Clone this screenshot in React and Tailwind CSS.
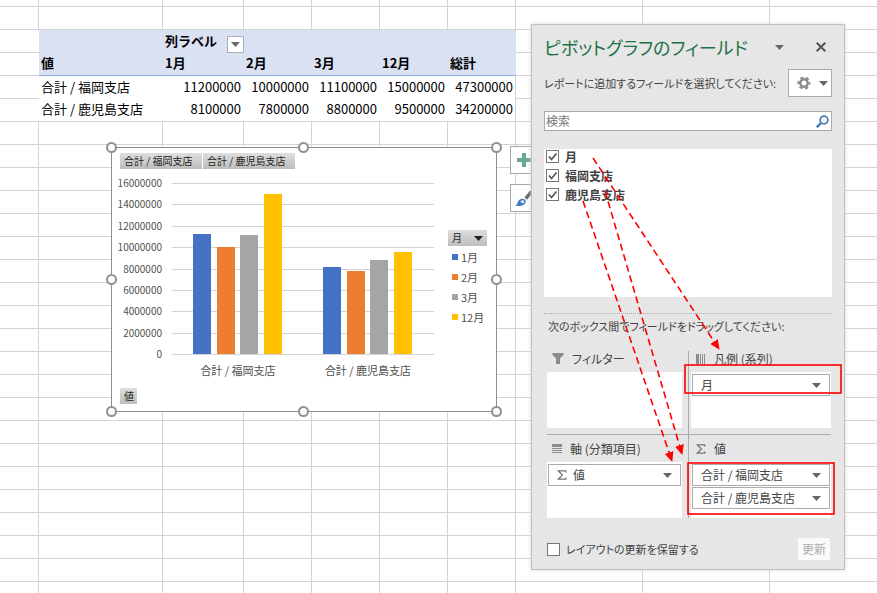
import { useState } from "react";

const COLUMNS = ["値", "1月", "2月", "3月", "12月", "総計"];

const ROWS = [
  { name: "合計 / 福岡支店", values: [11200000, 10000000, 11100000, 15000000] },
  { name: "合計 / 鹿児島支店", values: [8100000, 7800000, 8800000, 9500000] },
];

const SERIES = [
  { name: "1月", color: "#4472c4" },
  { name: "2月", color: "#ed7d31" },
  { name: "3月", color: "#a5a5a5" },
  { name: "12月", color: "#ffc000" },
];

const MAX = 16000000;
const TICKS = [0, 2, 4, 6, 8, 10, 12, 14, 16].map((n) => n * 1000000);

const Caret = ({ className = "" }) => (
  <svg viewBox="0 0 9 5" className={`w-[9px] h-[5px] shrink-0 ${className}`}>
    <path d="M0 0h9L4.5 5z" fill="currentColor" />
  </svg>
);

/* ---------- worksheet ---------- */

const EmptyRow = ({ first }) => (
  <tr className={first ? "h-[7px]" : "h-[23px]"}>
    {Array.from({ length: 10 }, (_, i) => (
      <td key={i} className="border-r border-b border-[#d4d4d4] p-0"></td>
    ))}
  </tr>
);

const Blank = ({ noRight }) => (
  <td
    className={
      noRight
        ? "border-b border-[#d4d4d4] p-0"
        : "border-r border-b border-[#d4d4d4] p-0"
    }></td>
);

const Sheet = () => (
  <table className="w-full table-fixed border-separate border-spacing-0 text-[13px] leading-5 text-black">
    <colgroup>
      <col className="w-[39px]" />
      <col className="w-[124px]" />
      <col className="w-[81px]" />
      <col className="w-[68px]" />
      <col className="w-[68px]" />
      <col className="w-[68px]" />
      <col className="w-[68px]" />
      <col className="w-[127px]" />
      <col className="w-[127px]" />
      <col />
    </colgroup>
    <tbody>
      <EmptyRow first />
      <EmptyRow />
      <tr className="h-[23px]">
        <Blank noRight />
        <td className="bg-[#d9e1f2] p-0"></td>
        <th className="bg-[#d9e1f2] p-0 pl-0.5 text-left font-bold">
          <div className="flex h-[22px] items-end justify-between">
            <span className="pb-0.5">列ラベル</span>
            <button
              type="button"
              aria-label="列ラベルのフィルター"
              className="flex h-[17px] w-[17px] items-center justify-center border border-[#a6b0bd] bg-white text-[#6a6a6a]">
              <Caret />
            </button>
          </div>
        </th>
        <td colSpan={4} className="bg-[#d9e1f2] p-0"></td>
        <Blank />
        <Blank />
        <Blank />
      </tr>
      <tr className="h-[23px]">
        <Blank noRight />
        {COLUMNS.map((name) => (
          <th
            key={name}
            className="border-b border-[#8ea9db] bg-[#d9e1f2] p-0 pb-0.5 pl-0.5 text-left font-bold">
            {name}
          </th>
        ))}
        <Blank />
        <Blank />
        <Blank />
      </tr>
      {ROWS.map((row, i) => {
        const line = i === ROWS.length - 1 ? "border-b border-b-[#d4d4d4]" : "";
        const total = row.values.reduce((a, b) => a + b, 0);
        return (
          <tr key={row.name} className="h-[23px]">
            <Blank noRight />
            <th
              className={`p-0 pb-0.5 pl-0.5 text-left font-normal whitespace-nowrap ${line}`}>
              {row.name}
            </th>
            {row.values.map((v, j) => (
              <td key={j} className={`p-0 pr-[3px] pb-0.5 text-right ${line}`}>
                {v}
              </td>
            ))}
            <td
              className={`border-r border-r-[#d4d4d4] p-0 pr-0.5 pb-0.5 text-right ${line}`}>
              {total}
            </td>
            <Blank />
            <Blank />
            <Blank />
          </tr>
        );
      })}
      {Array.from({ length: 21 }, (_, i) => (
        <EmptyRow key={i} />
      ))}
    </tbody>
  </table>
);

/* ---------- pivot chart ---------- */

const Handle = ({ className }) => (
  <span
    className={`absolute h-[11px] w-[11px] rounded-full border-2 border-[#8f8f8f] bg-white ${className}`}></span>
);

const Chip = ({ children, className = "" }) => (
  <button
    type="button"
    className={`flex h-4 items-center bg-linear-to-b from-[#dedede] to-[#bdbdbd] px-1 text-[10px] leading-4 whitespace-nowrap text-[#222] ${className}`}>
    {children}
  </button>
);

const Plot = () => {
  const y = (v) => 185 - (v / MAX) * 171;
  const groupX = [81, 211];

  return (
    <svg width="325" height="219" className="shrink-0" fill="#505050">
      {TICKS.map((t) => (
        <g key={t}>
          <rect x="60" y={Math.round(y(t))} width="262" height="1" fill="#d4d4d4" />
          <text x="50" y={Math.round(y(t)) + 4} textAnchor="end" fontSize="10">
            {t}
          </text>
        </g>
      ))}
      {ROWS.map((row, i) => (
        <g key={row.name}>
          {row.values.map((v, j) => (
            <rect
              key={j}
              x={groupX[i] + j * 24 - (j > 1 ? 1 : 0)}
              y={Math.round(y(v))}
              width="18"
              height={185 - Math.round(y(v))}
              fill={SERIES[j].color}
            />
          ))}
          <text x={groupX[i] + 45} y="206" textAnchor="middle" fontSize="11">
            {row.name}
          </text>
        </g>
      ))}
    </svg>
  );
};

const PivotChart = () => (
  <div className="absolute top-[147px] left-[111px] h-[265px] w-[386px] border border-[#8f8f8f] bg-white">
    <div className="flex gap-px pt-[5px] pl-2">
      <Chip className="w-[82px]">{ROWS[0].name}</Chip>
      <Chip className="w-[92px]">{ROWS[1].name}</Chip>
    </div>
    <div className="flex">
      <Plot />
      <div className="ml-[11px] pt-[61px]">
        <Chip className="w-[39px] justify-between">
          月
          <Caret />
        </Chip>
        <ul className="pt-px pl-1 text-[11px] leading-5 text-[#505050]">
          {SERIES.map((s) => (
            <li key={s.name} className="flex items-center gap-[3px]">
              <span
                className="h-1.5 w-1.5"
                style={{ backgroundColor: s.color }}></span>
              {s.name}
            </li>
          ))}
        </ul>
      </div>
    </div>
    <Chip className="ml-2 w-[17px]">値</Chip>

    <Handle className="-top-1.5 -left-1.5" />
    <Handle className="-top-1.5 left-[186px]" />
    <Handle className="-top-1.5 -right-1.5" />
    <Handle className="top-[126px] -left-1.5" />
    <Handle className="top-[126px] -right-1.5" />
    <Handle className="-bottom-1.5 -left-1.5" />
    <Handle className="-bottom-1.5 left-[186px]" />
    <Handle className="-right-1.5 -bottom-1.5" />
  </div>
);

const ChartTools = () => (
  <div className="absolute top-[146px] left-[510px] flex flex-col gap-2.5">
    <button
      type="button"
      aria-label="グラフ要素"
      className="flex h-7 w-7 items-center justify-center border border-[#a6a6a6] bg-white">
      <svg width="14" height="14" viewBox="0 0 14 14">
        <path d="M5 0h4v5h5v4H9v5H5V9H0V5h5z" fill="#6aa892" />
      </svg>
    </button>
    <button
      type="button"
      aria-label="グラフ スタイル"
      className="flex h-7 w-7 items-center justify-center border border-[#a6a6a6] bg-white">
      <svg width="18" height="18" viewBox="0 0 18 18">
        <path d="M9.500 8.500L15 1.500l3 2.200-6.200 7.300z" fill="#666" />
        <path d="M8.800 8.800l3.600 2.800" stroke="#fff" strokeWidth="1" />
        <path
          d="M0 16.500c2.700-.5 2.200-3.500 4-5.300 1.800-1.900 4.500-2 5.900-.7 1.500 1.400 1 4-1 5.200-2.700 1.600-6 1.800-8.900.8z"
          fill="#3f7ab5"
        />
        <path d="M5.200 12.800c.8-1.700 3-2 3.800-1 .8.900.2 2.400-1 2.700z" fill="#dbe8f5" />
      </svg>
    </button>
  </div>
);

/* ---------- field list pane ---------- */

const CheckBox = ({ id, checked, onChange }) => (
  <span className="relative flex h-[13px] w-[13px] shrink-0">
    <input
      id={id}
      type="checkbox"
      checked={checked}
      onChange={onChange}
      className="peer h-[13px] w-[13px] appearance-none border border-[#777] bg-white"
    />
    <svg
      viewBox="0 0 13 13"
      className="pointer-events-none absolute inset-0 hidden h-[13px] w-[13px] peer-checked:block">
      <path d="M3 6.500l2.500 3L10.500 3.500" fill="none" stroke="#555" strokeWidth="1.700" />
    </svg>
  </span>
);

const Sigma = () => (
  <svg width="10" height="10" viewBox="0 0 10 10" className="shrink-0">
    <path
      d="M8.800 2.500V.8H1.200L5.400 5 1.200 9.200h7.600V7.500"
      fill="none"
      stroke="#777"
      strokeWidth="1.300"
    />
  </svg>
);

const FunnelIcon = () => (
  <svg width="12" height="12" viewBox="0 0 12 12" className="shrink-0">
    <path d="M.5 0h11v2L8 5.500V11H4V5.500L.5 2z" fill="#8c8c8c" />
  </svg>
);

const SeriesIcon = () => (
  <svg width="10" height="10" viewBox="0 0 10 10" className="shrink-0">
    <path d="M0 0h3v10H0zM4 0h1v10H4zM6 0h1v10H6zM8 0h1v10H8z" fill="#8c8c8c" />
  </svg>
);

const AxisIcon = () => (
  <svg width="10" height="10" viewBox="0 0 10 10" className="shrink-0">
    <path d="M0 0h10v3H0zM0 4h10v1H0zM0 6h10v1H0zM0 8h10v1H0z" fill="#8c8c8c" />
  </svg>
);

const FieldButton = ({ children, icon }) => (
  <button
    type="button"
    className="flex h-[22px] w-full items-center gap-1.5 border border-[#ababab] bg-white pr-2 pl-2 text-left text-[#444]">
    {icon}
    <span className="flex-1">{children}</span>
    <Caret className="text-[#666]" />
  </button>
);

const Area = ({ icon, title, lower, right, children }) => (
  <section
    className={`flex flex-col border-[#ababab] ${right ? "pl-0.5" : "border-r pr-1.5"}`}>
    <h3
      className={`flex items-center gap-2 pl-[5px] text-[12px] font-normal ${lower ? "h-[27px]" : "mb-[5px] h-4"}`}>
      {icon}
      {title}
    </h3>
    <div className="flex h-14 flex-col gap-px bg-white px-px pt-0.5">
      {children}
    </div>
  </section>
);

const FieldPane = () => {
  const [fields, setFields] = useState([
    { name: "月", on: true },
    { name: "福岡支店", on: true },
    { name: "鹿児島支店", on: true },
  ]);
  const [defer, setDefer] = useState(false);

  const toggle = (name) =>
    setFields(fields.map((f) => (f.name === name ? { ...f, on: !f.on } : f)));

  return (
    <aside className="absolute top-6 left-[531px] w-[314px] border border-[#c0c0c0] bg-[#e6e6e6] px-3 pb-[9px] text-[12px] leading-4 text-[#444] shadow-[0_0_4px_#d8d8d8] [font-feature-settings:'palt']">
      <header className="flex h-11 items-center">
        <h2 className="flex-1 text-[18px] leading-6 whitespace-nowrap text-[#217346]">
          ピボットグラフのフィールド
        </h2>
        <button type="button" aria-label="作業ウィンドウ オプション" className="text-[#666]">
          <Caret />
        </button>
        <button type="button" aria-label="閉じる" className="mr-1.5 ml-8 text-[#555]">
          <svg width="10" height="10" viewBox="0 0 10 10">
            <path d="M.7.7l8.600 8.600M9.300.7L.7 9.300" stroke="currentColor" strokeWidth="2" />
          </svg>
        </button>
      </header>

      <div className="flex h-7 items-center justify-between">
        <p className="text-[11px] whitespace-nowrap">
          レポートに追加するフィールドを選択してください:
        </p>
        <button
          type="button"
          aria-label="ツール"
          className="flex h-7 w-11 shrink-0 items-center justify-center gap-2 border border-[#ababab] bg-white pl-1 text-[#666]">
          <svg width="14" height="14" viewBox="0 0 14 14" fill="none" stroke="#8c8c8c">
            <circle cx="7" cy="7" r="3.700" strokeWidth="2.400" />
            <circle
              cx="7"
              cy="7"
              r="5.600"
              strokeWidth="2"
              strokeDasharray="3.200 2.664"
              strokeDashoffset="1.600"
            />
          </svg>
          <Caret />
        </button>
      </div>

      <div className="mt-3.5 flex h-5 items-center border border-[#ababab] bg-white pr-0.5 pl-px">
        <input
          type="text"
          aria-label="検索"
          placeholder="検索"
          className="min-w-0 flex-1 bg-transparent placeholder:text-[#777] focus:outline-none"
        />
        <svg width="13" height="13" viewBox="0 0 13 13" fill="none" stroke="#3f7ab5">
          <circle cx="8" cy="5" r="3.900" strokeWidth="1.700" />
          <path d="M5 8L.8 12.200" strokeWidth="2.400" />
        </svg>
      </div>

      <ul className="mt-[18px] h-[148px] bg-white pl-0.5 font-bold">
        {fields.map((f) => (
          <li key={f.name} className="flex h-[19px] items-center gap-1.5 pb-1">
            <CheckBox
              id={`field-${f.name}`}
              checked={f.on}
              onChange={() => toggle(f.name)}
            />
            <label htmlFor={`field-${f.name}`}>{f.name}</label>
          </li>
        ))}
      </ul>

      <p className="mt-4 border-t border-dotted border-[#ababab] pl-1 text-[11px] leading-6 whitespace-nowrap">
        次のボックス間でフィールドをドラッグしてください:
      </p>

      <div className="mt-[13px] pr-px pl-[3px]">
        <div className="grid grid-cols-2">
          <Area icon={<FunnelIcon />} title="フィルター" />
          <Area right icon={<SeriesIcon />} title="凡例 (系列)">
            <FieldButton>月</FieldButton>
          </Area>
        </div>
        <div className="grid h-[7px] grid-cols-2 border-b border-[#ababab]">
          <span className="border-r border-[#ababab]"></span>
        </div>
        <div className="grid grid-cols-2">
          <Area lower icon={<AxisIcon />} title="軸 (分類項目)">
            <FieldButton icon={<Sigma />}>値</FieldButton>
          </Area>
          <Area lower right icon={<Sigma />} title="値">
            <FieldButton>合計 / 福岡支店</FieldButton>
            <FieldButton>合計 / 鹿児島支店</FieldButton>
          </Area>
        </div>
      </div>

      <footer className="mt-5 flex h-[22px] items-center gap-1.5 pr-0.5 pl-[3px]">
        <CheckBox
          id="defer"
          checked={defer}
          onChange={() => setDefer(!defer)}
        />
        <label htmlFor="defer" className="flex-1 text-[11px]">
          レイアウトの更新を保留する
        </label>
        <button type="button" disabled className="h-[22px] w-8 bg-[#fafafa] text-[#ababab]">
          更新
        </button>
      </footer>
    </aside>
  );
};

/* ---------- red annotation marks ---------- */

const Marks = () => (
  <svg
    width="878"
    height="593"
    className="pointer-events-none absolute top-0 left-0"
    fill="none"
    stroke="#f00"
    strokeWidth="1.600">
    <defs>
      <marker
        id="head"
        markerUnits="userSpaceOnUse"
        markerWidth="10"
        markerHeight="10"
        refX="9"
        refY="5"
        orient="auto">
        <path d="M0 .5L10 5 0 9.500z" fill="#f00" stroke="none" />
      </marker>
    </defs>
    <g strokeDasharray="7 4">
      <path d="M593 158L719 349" markerEnd="url(#head)" />
      <path d="M605 191L682 454" markerEnd="url(#head)" />
      <path d="M583 201L672 461" markerEnd="url(#head)" />
    </g>
    <rect x="685" y="365" width="156" height="28" />
    <rect x="688" y="463" width="146" height="51" />
  </svg>
);

const App = () => {
  return (
    <main
      lang="ja"
      className="relative h-screen overflow-hidden bg-white font-['Noto_Sans_CJK_JP',sans-serif]">
      <Sheet />
      <PivotChart />
      <ChartTools />
      <FieldPane />
      <Marks />
    </main>
  );
};

export default App;
